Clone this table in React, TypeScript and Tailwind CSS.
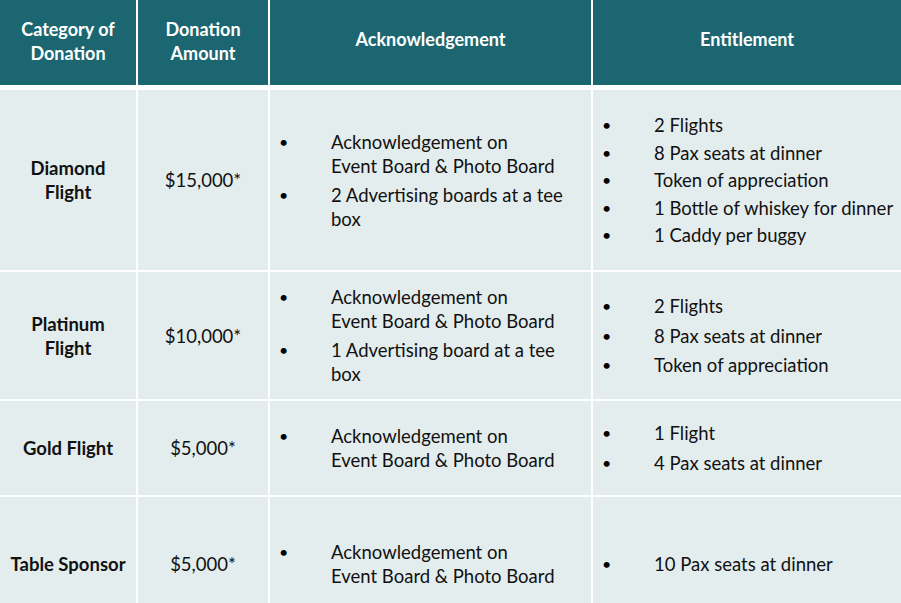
const rows = [
  {
    name: ['Diamond', 'Flight'],
    amount: '$15,000*',
    h: 'h-[180px]',
    ackGap: 'gap-[5px]',
    entGap: 'gap-[3.5px]',
    ack: [
      ['Acknowledgement on', 'Event Board & Photo Board'],
      ['2 Advertising boards at a tee', 'box'],
    ],
    ent: ['2 Flights', '8 Pax seats at dinner', 'Token of appreciation', '1 Bottle of whiskey for dinner', '1 Caddy per buggy'],
  },
  {
    name: ['Platinum', 'Flight'],
    amount: '$10,000*',
    h: 'h-[127px]',
    ackGap: 'gap-[5px]',
    entGap: 'gap-[5.5px]',
    ack: [
      ['Acknowledgement on', 'Event Board & Photo Board'],
      ['1 Advertising board at a tee', 'box'],
    ],
    ent: ['2 Flights', '8 Pax seats at dinner', 'Token of appreciation'],
  },
  {
    name: ['Gold Flight'],
    amount: '$5,000*',
    h: 'h-[94px]',
    ackGap: 'gap-[5px]',
    entGap: 'gap-[6px]',
    ack: [['Acknowledgement on', 'Event Board & Photo Board']],
    ent: ['1 Flight', '4 Pax seats at dinner'],
  },
  {
    name: ['Table Sponsor'],
    amount: '$5,000*',
    h: 'h-[134px]',
    ackGap: 'gap-[5px]',
    entGap: 'gap-[6px]',
    ack: [['Acknowledgement on', 'Event Board & Photo Board']],
    ent: ['10 Pax seats at dinner'],
  },
];

const cols = 'grid grid-cols-[136px_130px_321px_308px] gap-x-[2px]';

function Bullet({ lines }: { lines: string[] }) {
  return (
    <div className="flex">
      <span className="w-[61px] shrink-0 pl-[9px] text-[16px] text-black">•</span>
      <div>
        {lines.map((l) => (
          <div key={l} className="whitespace-nowrap">{l}</div>
        ))}
      </div>
    </div>
  );
}

export default function App() {
  return (
    <div
      className="h-[603px] w-[901px] overflow-hidden bg-white text-[18.5px] leading-[24px] text-[#111]"
      style={{ fontFamily: 'Lato, "Open Sans", sans-serif' }}
    >
      <div className={`${cols} h-[85px] text-[18px] font-bold text-white`}>
        <div className="flex flex-col items-center justify-center bg-[#1b6670] pb-[3px] text-center">
          <div>Category of</div>
          <div>Donation</div>
        </div>
        <div className="flex flex-col items-center justify-center bg-[#1b6670] pb-[3px] text-center">
          <div>Donation</div>
          <div>Amount</div>
        </div>
        <div className="flex items-center justify-center bg-[#1b6670] pb-[8px]">Acknowledgement</div>
        <div className="flex items-center justify-center bg-[#1b6670] pb-[8px]">Entitlement</div>
      </div>

      <div className="mt-[5px] flex flex-col gap-y-[2px]">
        {rows.map((r) => (
          <div key={r.amount + r.name[0]} className={`${cols} ${r.h}`}>
            <div className="flex flex-col items-center justify-center bg-[#e4edee] text-center font-bold">
              {r.name.map((n) => (
                <div key={n}>{n}</div>
              ))}
            </div>
            <div className="flex items-center justify-center bg-[#e4edee]">{r.amount}</div>
            <div className={`flex flex-col justify-center bg-[#e4edee] ${r.ackGap}`}>
              {r.ack.map((a) => (
                <Bullet key={a.join()} lines={a} />
              ))}
            </div>
            <div className={`flex flex-col justify-center bg-[#e4edee] ${r.entGap}`}>
              {r.ent.map((e) => (
                <Bullet key={e} lines={[e]} />
              ))}
            </div>
          </div>
        ))}
      </div>
    </div>
  );
}
